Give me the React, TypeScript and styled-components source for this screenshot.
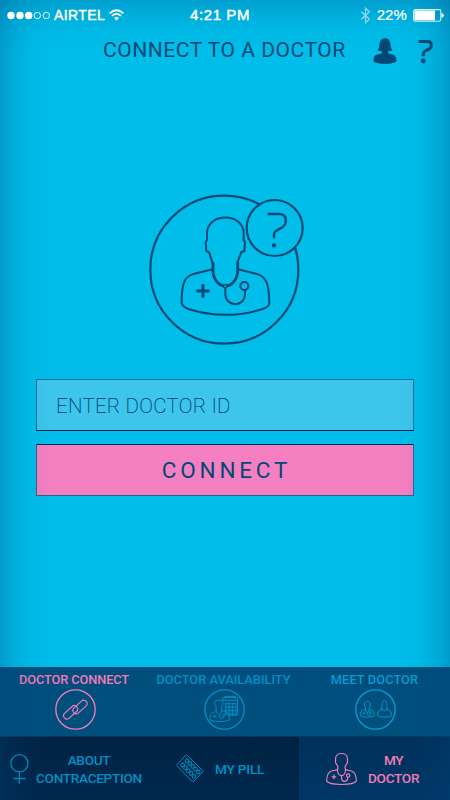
import React from 'react';
import styled, { createGlobalStyle } from 'styled-components';

const INK = '#004876';
const PINK = '#f37bb8';
const DIM = '#008fc4';

const GlobalStyle = createGlobalStyle`
  * { box-sizing: border-box; }
  body { margin: 0; }
  svg { display: block; overflow: visible; flex: none; }
`;

const Screen = styled.div`
  position: relative;
  width: 450px;
  height: 800px;
  overflow: hidden;
  display: flex;
  flex-direction: column;
  background: #00bde9;
  font-family: Roboto, Inter, sans-serif;
  color: ${INK};
`;

const Vignette = styled.div`
  position: absolute;
  inset: 0;
  pointer-events: none;
  background:
    linear-gradient(90deg, rgba(0, 70, 125, 0.28), rgba(0, 70, 125, 0.14) 14px, rgba(0, 70, 125, 0.04) 32px, transparent 52px),
    linear-gradient(270deg, rgba(0, 70, 125, 0.28), rgba(0, 70, 125, 0.14) 14px, rgba(0, 70, 125, 0.04) 32px, transparent 52px),
    linear-gradient(180deg, rgba(0, 70, 125, 0.26), rgba(0, 70, 125, 0.14) 13px, rgba(0, 70, 125, 0.04) 32px, transparent 50px);
`;

const StatusBar = styled.div`
  position: relative;
  z-index: 1;
  height: 30px;
  display: grid;
  grid-template-columns: 190px 1fr 92px;
  align-items: center;
  padding-left: 7px;
  font-family: 'Liberation Sans', sans-serif;
  color: #fff;
`;

const StatusGroup = styled.div`
  display: flex;
  align-items: center;
`;

const StatusText = styled.span<{ $size: number; $spacing?: number; $heavy?: boolean }>`
  font-size: ${p => p.$size}px;
  line-height: 20px;
  letter-spacing: ${p => p.$spacing ?? 0}px;
  -webkit-text-stroke: ${p => (p.$heavy ? 0.45 : 0.2)}px #fff;
  white-space: nowrap;
`;

const Carrier = styled(StatusGroup)`
  gap: 4px;
`;

const Clock = styled(StatusGroup)`
  margin-left: -7px;
`;

const Power = styled(StatusGroup)`
  justify-content: flex-end;
  padding-right: 6px;
  gap: 6px;
  margin-left: -10px;
`;

const Header = styled.header`
  height: 50px;
  display: flex;
  align-items: flex-start;
  padding: 8px 16px 0 103px;
`;

const Title = styled.h1`
  width: 270px;
  margin: 0;
  font-size: 21px;
  line-height: 24px;
  font-weight: 400;
  letter-spacing: 0.55px;
  white-space: nowrap;
`;

const HeaderIcons = styled.div`
  display: flex;
  gap: 20px;
`;

const Hero = styled.div`
  margin: 105px 0 0 140px;
  height: 165px;
`;

const Form = styled.div`
  width: 378px;
  margin: 29px 36px 0;
  display: flex;
  flex-direction: column;
  gap: 13px;
`;

const Field = styled.div`
  height: 52px;
  padding: 2px 19px 0;
  display: flex;
  align-items: center;
  border: 1px solid #146e98;
  border-bottom-color: #00234b;
  background: #3dc5ec;
  font-size: 20.5px;
  font-weight: 200;
  letter-spacing: 0.25px;
  color: #003a6c;
  white-space: nowrap;
`;

const ConnectButton = styled.button`
  height: 52px;
  padding: 0 0 0 3px;
  border: 1px solid #2f6288;
  border-top-color: #00305c;
  background: #f47fc1;
  font-family: inherit;
  font-size: 22.5px;
  font-weight: 400;
  letter-spacing: 3.8px;
  color: ${INK};
`;

const Tabs = styled.nav`
  height: 70px;
  margin-top: auto;
  display: grid;
  grid-template-columns: 148px 151px 151px;
  background: #004e7c;
  border-bottom: 1px solid #003c66;
`;

const Tab = styled.div<{ $color: string }>`
  display: flex;
  flex-direction: column;
  align-items: center;
  padding-top: 5px;
  color: ${p => p.$color};

  svg { margin-left: 2px; }
`;

const TabLabel = styled.span<{ $spacing?: number }>`
  height: 17px;
  line-height: 15px;
  font-size: 12.8px;
  font-weight: 500;
  letter-spacing: ${p => p.$spacing ?? 0}px;
  white-space: nowrap;
`;

const BottomNav = styled.nav`
  height: 63px;
  display: grid;
  grid-template-columns: 149px 150px 151px;
`;

const NavItem = styled.div<{ $active?: boolean; $left: number; $gap: number }>`
  display: flex;
  align-items: center;
  gap: ${p => p.$gap}px;
  padding-left: ${p => p.$left}px;
  color: ${p => (p.$active ? PINK : DIM)};
  background: ${p => (p.$active ? 'linear-gradient(#003159, #003668)' : 'linear-gradient(#002342, #00284e)')};
`;

const NavLabel = styled.span<{ $spacing: number }>`
  font-size: 13.6px;
  line-height: 18px;
  font-weight: 500;
  letter-spacing: ${p => p.$spacing}px;
  text-align: center;
  white-space: nowrap;
`;

const HEAD =
  'M218 236 L207 201 L199 199 L197 171 L201 165 V145 C201 82 311 82 311 145 V165 L315 171 L313 199 L304 201 L291 236';
const COAT =
  'M218 253 L157 268 C132 277 125 296 125 355 Q128 366 145 372 Q257 407 368 372 Q386 366 388 355 C387 296 379 277 354 268 L294 253';

/* Drawn on a 510 x 495 canvas. */
function DoctorFigure({ weight }: { weight: number }) {
  return (
    <g fill="none" stroke="currentColor" strokeWidth={weight} strokeLinejoin="round">
      <path d={HEAD} />
      <path d={COAT} />
      <path d="M219 232 V262 C223 290 241 303 256 303 C271 303 289 290 293 262 V232" strokeWidth={weight * 1.4} />
      <path d="M169 318 H209 M189 298 V338" strokeWidth={weight * 1.5} />
      <path d="M256 304 V329 C259 367 313 367 315 329 V316" />
      <circle cx="256" cy="304" r="5" fill="#00bde9" strokeWidth={weight * 0.7} />
      <circle cx="313" cy="303" r="12" />
    </g>
  );
}

function SimpleDoctor({ female }: { female?: boolean }) {
  return (
    <g fill="none" stroke="currentColor" strokeLinejoin="round">
      {female ? (
        <path d="M36 58 L25 54 C36 44 28 10 47 10 C66 10 58 44 69 54 L58 58 V64 Q47 76 36 64 V58" />
      ) : (
        <path d="M36 52 L35 66 Q37 80 47 80 Q57 80 59 66 L58 52 L65 41 V28 C64 8 30 8 29 28 V41 Z" />
      )}
      <path d="M35 62 L17 66 Q2 71 2 97 Q9 107 47 107 Q85 107 92 97 Q92 71 77 66 L59 62" />
      {!female && (
        <>
          <path d="M17 84 H31 M24 77 V91" />
          <path d="M47 80 V87 C48 101 67 101 66 85" />
          <circle cx="67" cy="80" r="5" />
        </>
      )}
    </g>
  );
}

const Emblem = () => (
  <svg width="170" height="165" viewBox="0 0 510 495" color={INK}>
    <circle cx="253" cy="254" r="222" fill="none" stroke="currentColor" strokeWidth="6.5" />
    <DoctorFigure weight={6} />
    <circle cx="404" cy="129" r="84" fill="#00bde9" stroke="currentColor" strokeWidth="6.5" />
    <path d="M383 87 H417 Q437 87 437 104 V112 C437 133 402 130 402 148 V160" fill="none" stroke="currentColor" strokeWidth="7" />
    <circle cx="402" cy="181" r="6.5" fill="currentColor" />
  </svg>
);

const Signal = () => (
  <svg width="43" height="9" viewBox="0 0 43 9">
    {[4, 13, 21.7].map(x => <circle key={x} cx={x} cy="4.5" r="3.7" fill="#fff" />)}
    {[30.3, 39.3].map(x => <circle key={x} cx={x} cy="4.5" r="3.2" fill="none" stroke="#fff" strokeWidth=".9" />)}
  </svg>
);

const Wifi = () => (
  <svg width="15" height="12" viewBox="0 0 15 12" fill="none" stroke="#fff" strokeWidth="1.8">
    <path d="M.7 4.3 Q7.5 -1.9 14.3 4.3 M3 6.9 Q7.5 2.8 12 6.9" />
    <path d="M5.1 9 Q7.5 7 9.9 9 L7.5 11.5 Z" fill="#fff" stroke="none" />
  </svg>
);

const Bluetooth = () => (
  <svg width="10" height="17" viewBox="0 0 10 17" fill="none" stroke="#8fd6ee" strokeWidth="1.3">
    <path d="M.3 4.7 L8.3 12.1 L4.5 15.8 V1.2 L8.3 4.8 L.3 12.3" />
  </svg>
);

const Battery = () => (
  <svg width="31" height="13" viewBox="0 0 31 13">
    <rect x=".6" y=".6" width="27.2" height="11.6" rx="1.6" fill="none" stroke="#d9f3fb" strokeWidth="1.1" />
    <rect x="1.5" y="1.5" width="20.5" height="9.8" fill="#fff" />
    <path d="M28.6 4 Q30.8 4.5 30.8 6.4 Q30.8 8.3 28.6 8.8 Z" fill="#fff" />
  </svg>
);

const Profile = () => (
  <svg width="24" height="26" viewBox="0 0 24 26" fill={INK}>
    <path d="M12 .2 C16.8 .2 17.2 4 17.6 7.2 C17.9 10 18.4 11.2 19.4 12 Q18 13.2 15 13.2 V15.3 L20.5 16.8 Q23.7 17.9 23.5 23.5 Q20 25.8 12 25.8 Q4 25.8 .5 23.5 Q.3 17.9 3.5 16.8 L9 15.3 V13.2 Q6 13.2 4.6 12 Q6 11 6.4 7.2 C6.8 4 7.2 .2 12 .2 Z" />
  </svg>
);

const Help = () => (
  <svg width="16" height="25" viewBox="0 0 16 25" fill="none" stroke={INK} strokeWidth="3">
    <path d="M1.6 3.4 H10.6 Q14.3 3.4 14.3 6.6 V7.6 Q14.3 10.3 11.4 11.5 L9 12.5 Q6.3 13.7 6.3 15.8 V18.3" />
    <circle cx="6.3" cy="23" r="2.4" fill={INK} stroke="none" />
  </svg>
);

const Ring = ({ children }: { children: React.ReactNode }) => (
  <svg width="41" height="41" viewBox="0 0 123 123" fill="none" stroke="currentColor" strokeWidth="3">
    <circle cx="61.5" cy="61.5" r="59" strokeWidth="4" />
    {children}
  </svg>
);

const LinkIcon = () => (
  <Ring>
    <g strokeWidth="3.4">
      <rect x="-25" y="-10" width="50" height="20" rx="10" transform="translate(47 70) rotate(-42)" />
      <rect x="-25" y="-10" width="50" height="20" rx="10" transform="translate(75 54) rotate(-42)" />
    </g>
  </Ring>
);

const AvailabilityIcon = () => (
  <Ring>
    <path d="M56 36 V29 Q56 25 60 25 H97 Q101 25 101 29 V74 Q101 79 97 79 H75 M56 34 H101 M64 21 V30 M93 21 V30 M64 22 H93" />
    <path d="M62 44 H97 M62 54 H97 M62 65 H97 M62 75 H97 M65 41 V77 M75 41 V77 M86 41 V77 M96 41 V77" />
    <path d="M35 64 L37 54 Q30 46 32 40 C34 31 55 31 57 40 Q60 46 52 54 L54 64 M37 62 Q37 76 45 76 Q53 76 53 62" />
    <path d="M35 68 Q18 70 18 89 V93 Q26 98 47 98 Q70 98 76 93 Q76 72 66 69 L54 66 M27 82 H37 M32 77 V87 M46 77 C46 93 60 91 59 81" />
    <circle cx="59" cy="79" r="4" />
  </Ring>
);

const MeetIcon = () => (
  <Ring>
    <g transform="translate(15 30) scale(.47 .51)" strokeWidth="5.5"><SimpleDoctor /></g>
    <g transform="translate(66 30) scale(.47 .51)" strokeWidth="5.5"><SimpleDoctor female /></g>
  </Ring>
);

const FemaleIcon = () => (
  <svg width="20" height="31" viewBox="0 0 20 31" fill="none" stroke="currentColor" strokeWidth="1.3">
    <circle cx="9.4" cy="10.3" r="8.6" />
    <path d="M9.4 19 V31 M3.3 25.5 H15.4" />
  </svg>
);

const PillIcon = () => (
  <svg width="28" height="29" viewBox="0 0 84 87" fill="none" stroke="currentColor" strokeWidth="3">
    <path d="M4 31 L28 5 Q31 2 35 5 L79 49 Q82 52 79 55 L54 81 Q51 84 47 81 L4 37 Q1 34 4 31 Z" />
    {[0, 1, 2, 3, 4].map(i => (
      <g key={i}>
        <ellipse cx={33 + i * 8.5} cy={20 + i * 8.5} rx="6" ry="4.6" transform={`rotate(-45 ${33 + i * 8.5} ${20 + i * 8.5})`} />
        <ellipse cx={20 + i * 8.5} cy={33 + i * 8.5} rx="6" ry="4.6" transform={`rotate(-45 ${20 + i * 8.5} ${33 + i * 8.5})`} />
      </g>
    ))}
  </svg>
);

const DoctorIcon = () => (
  <svg width="31" height="34" viewBox="0 10 94 100" strokeWidth="3.6">
    <SimpleDoctor />
  </svg>
);

export default function App() {
  return (
    <>
      <GlobalStyle />
      <Screen>
        <Vignette />
        <StatusBar>
          <Carrier>
            <Signal />
            <StatusText $size={14} $heavy $spacing={0.4}>AIRTEL</StatusText>
            <Wifi />
          </Carrier>
          <Clock><StatusText $size={15} $heavy $spacing={0.6}>4:21 PM</StatusText></Clock>
          <Power>
            <Bluetooth />
            <StatusText $size={15} $spacing={0.1}>22%</StatusText>
            <Battery />
          </Power>
        </StatusBar>
        <Header>
          <Title>CONNECT TO A DOCTOR</Title>
          <HeaderIcons><Profile /><Help /></HeaderIcons>
        </Header>
        <Hero><Emblem /></Hero>
        <Form>
          <Field>ENTER DOCTOR ID</Field>
          <ConnectButton>CONNECT</ConnectButton>
        </Form>
        <Tabs>
          <Tab $color={PINK}><TabLabel $spacing={-0.1}>DOCTOR CONNECT</TabLabel><LinkIcon /></Tab>
          <Tab $color={DIM}><TabLabel>DOCTOR AVAILABILITY</TabLabel><AvailabilityIcon /></Tab>
          <Tab $color="#009fd4"><TabLabel $spacing={0.1}>MEET DOCTOR</TabLabel><MeetIcon /></Tab>
        </Tabs>
        <BottomNav>
          <NavItem $left={10} $gap={6}><FemaleIcon /><NavLabel $spacing={-0.3}>ABOUT<br />CONTRACEPTION</NavLabel></NavItem>
          <NavItem $left={27} $gap={11}><PillIcon /><NavLabel $spacing={-0.2}>MY PILL</NavLabel></NavItem>
          <NavItem $active $left={27} $gap={11}><DoctorIcon /><NavLabel $spacing={-0.3}>MY<br />DOCTOR</NavLabel></NavItem>
        </BottomNav>
      </Screen>
    </>
  );
}
